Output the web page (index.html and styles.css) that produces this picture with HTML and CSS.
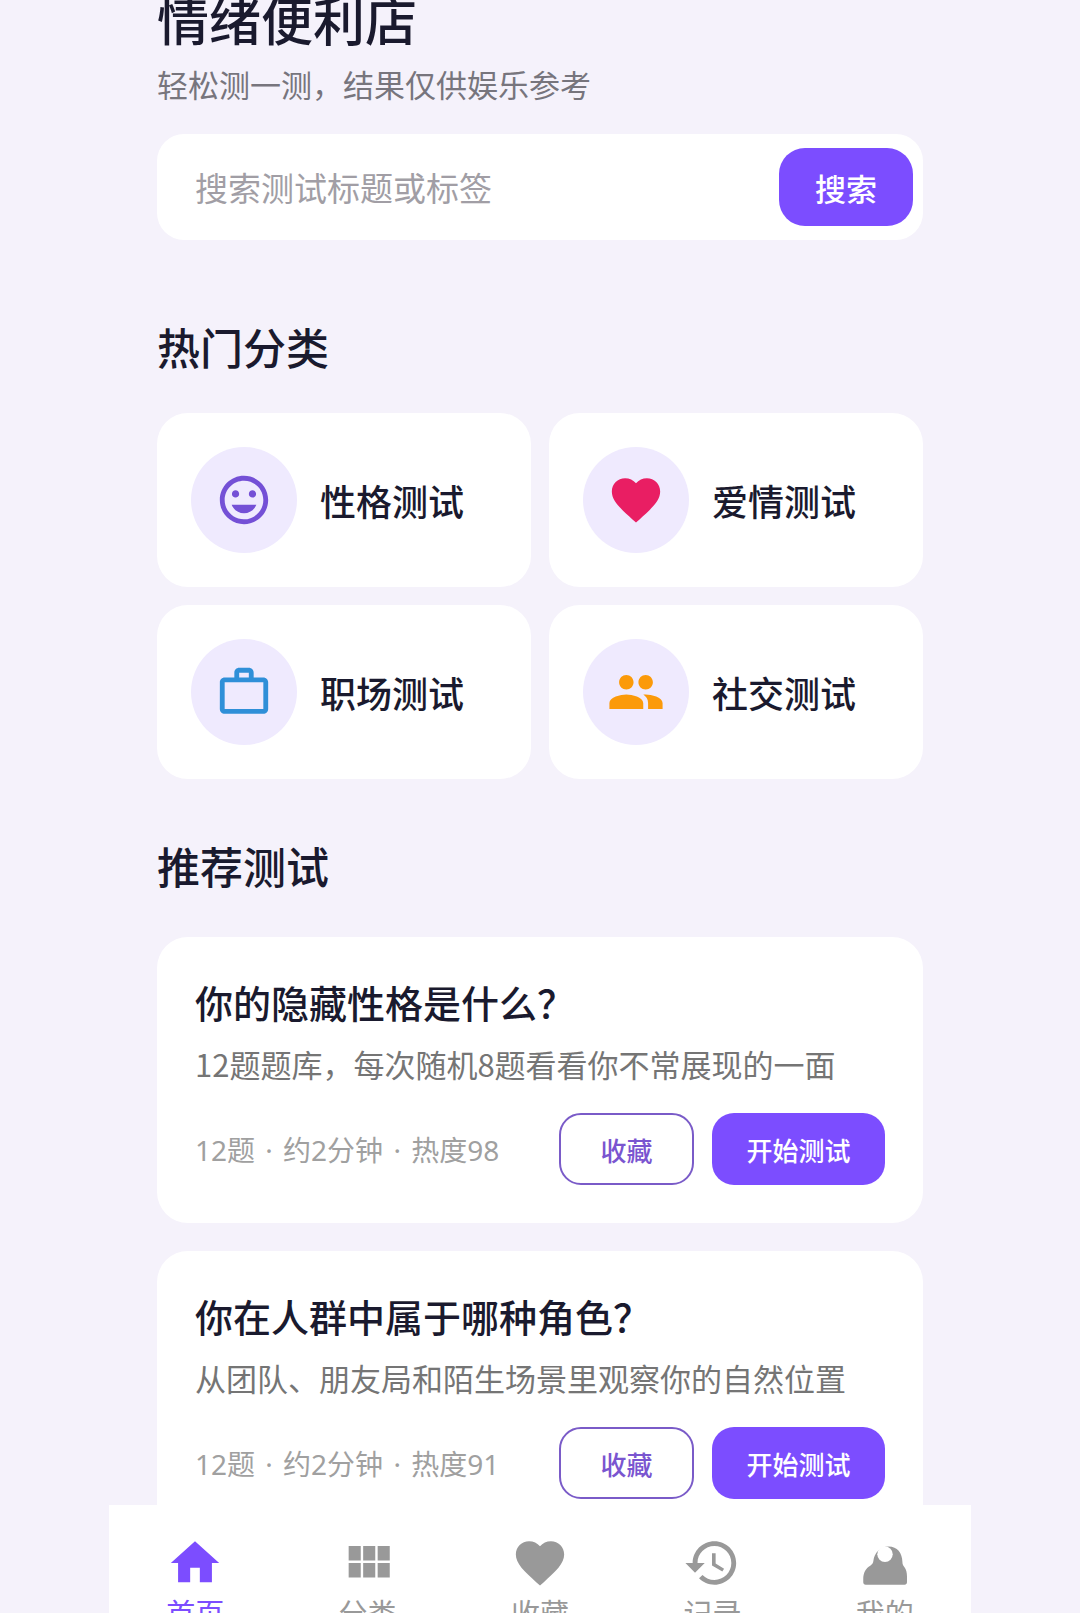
FILE: index.html
```html
<!DOCTYPE html>
<html lang="zh-CN">

<head>
    <meta charset="UTF-8" />
    <meta name="viewport" content="width=device-width, initial-scale=1.0" />
    <title>情绪便利店</title>
    <link rel="stylesheet" href="styles.css">
</head>

<body>

    <main class="page">
        <header>
            <h1>情绪便利店</h1>
            <p class="subtitle">轻松测一测，结果仅供娱乐参考</p>
        </header>

        <form class="search" role="search">
            <input type="search" placeholder="搜索测试标题或标签" aria-label="搜索测试标题或标签">
            <button type="button" class="btn btn-search">搜索</button>
        </form>

        <section class="section">
            <h2>热门分类</h2>
            <div class="category-grid">
                <a class="category" href="#personality">
                    <span class="category-icon smile">
                        <svg class="icon" viewBox="0 0 24 24" aria-hidden="true"><path d="M11.99 2C6.47 2 2 6.48 2 12s4.47 10 9.99 10C17.52 22 22 17.52 22 12S17.52 2 11.99 2zM12 20c-4.42 0-8-3.58-8-8s3.58-8 8-8 8 3.58 8 8-3.58 8-8 8zm3.5-9c.83 0 1.5-.67 1.5-1.5S16.33 8 15.5 8 14 8.67 14 9.5s.67 1.5 1.5 1.5zm-7 0c.83 0 1.5-.67 1.5-1.5S9.33 8 8.5 8 7 8.67 7 9.5 7.67 11 8.5 11zm3.5 6.5c2.33 0 4.31-1.46 5.11-3.5H6.89c.8 2.04 2.78 3.5 5.11 3.5z" /></svg>
                    </span>
                    性格测试
                </a>
                <a class="category" href="#love">
                    <span class="category-icon love">
                        <svg class="icon" viewBox="0 0 24 24" aria-hidden="true"><path d="M12 21.35l-1.45-1.32C5.4 15.36 2 12.28 2 8.5 2 5.42 4.42 3 7.5 3c1.74 0 3.41.81 4.5 2.09C13.09 3.81 14.76 3 16.5 3 19.58 3 22 5.42 22 8.5c0 3.78-3.4 6.86-8.55 11.54L12 21.35z" /></svg>
                    </span>
                    爱情测试
                </a>
                <a class="category" href="#work">
                    <span class="category-icon work">
                        <svg class="icon" viewBox="0 0 24 24" aria-hidden="true"><path d="M14 6V4h-4v2h4zM4 8v11h16V8H4zm16-2c1.11 0 2 .89 2 2v11c0 1.11-.89 2-2 2H4c-1.11 0-2-.89-2-2l.01-11c0-1.11.88-2 1.99-2h4V4c0-1.11.89-2 2-2h4c1.11 0 2 .89 2 2v2h4z" /></svg>
                    </span>
                    职场测试
                </a>
                <a class="category" href="#social">
                    <span class="category-icon social">
                        <svg class="icon" viewBox="0 0 24 24" aria-hidden="true"><path d="M16 11c1.66 0 2.99-1.34 2.99-3S17.66 5 16 5c-1.66 0-3 1.34-3 3s1.34 3 3 3zm-8 0c1.66 0 2.99-1.34 2.99-3S9.66 5 8 5C6.34 5 5 6.34 5 8s1.34 3 3 3zm0 2c-2.33 0-7 1.17-7 3.5V19h14v-2.5c0-2.33-4.67-3.5-7-3.5zm8 0c-.29 0-.62.02-.97.05 1.16.84 1.97 1.97 1.97 3.45V19h6v-2.5c0-2.33-4.67-3.5-7-3.5z" /></svg>
                    </span>
                    社交测试
                </a>
            </div>
        </section>

        <section class="section">
            <h2>推荐测试</h2>
            <div class="test-list">
                <article class="test">
                    <h3>你的隐藏性格是什么？</h3>
                    <p class="desc">12题题库，每次随机8题看看你不常展现的一面</p>
                    <div class="test-footer">
                        <span class="meta">12题 <span class="dot">·</span> 约2分钟 <span class="dot">·</span> 热度98</span>
                        <button type="button" class="btn btn-outline">收藏</button>
                        <button type="button" class="btn btn-start">开始测试</button>
                    </div>
                </article>
                <article class="test">
                    <h3>你在人群中属于哪种角色？</h3>
                    <p class="desc">从团队、朋友局和陌生场景里观察你的自然位置</p>
                    <div class="test-footer">
                        <span class="meta">12题 <span class="dot">·</span> 约2分钟 <span class="dot">·</span> 热度91</span>
                        <button type="button" class="btn btn-outline">收藏</button>
                        <button type="button" class="btn btn-start">开始测试</button>
                    </div>
                </article>
            </div>
        </section>
    </main>

    <!-- 底部导航 -->
    <nav class="tabbar">
        <a class="tab active" href="#home">
            <svg class="icon" viewBox="0 0 24 24" aria-hidden="true"><path d="M10 20v-6h4v6h5v-8h3L12 3 2 12h3v8z" /></svg>
            首页
        </a>
        <a class="tab" href="#category">
            <svg class="icon" viewBox="0 0 24 24" aria-hidden="true"><path d="M4 11h5V5H4v6zm0 7h5v-6H4v6zm6 0h5v-6h-5v6zm6 0h5v-6h-5v6zm-6-7h5V5h-5v6zm6-6v6h5V5h-5z" /></svg>
            分类
        </a>
        <a class="tab" href="#favorite">
            <svg class="icon" viewBox="0 0 24 24" aria-hidden="true"><path d="M12 21.35l-1.45-1.32C5.4 15.36 2 12.28 2 8.5 2 5.42 4.42 3 7.5 3c1.74 0 3.41.81 4.5 2.09C13.09 3.81 14.76 3 16.5 3 19.58 3 22 5.42 22 8.5c0 3.78-3.4 6.86-8.55 11.54L12 21.35z" /></svg>
            收藏
        </a>
        <a class="tab" href="#history">
            <svg class="icon" viewBox="0 0 24 24" aria-hidden="true"><path d="M13 3c-4.97 0-9 4.03-9 9H1l3.89 3.89.07.14L9 12H6c0-3.87 3.13-7 7-7s7 3.13 7 7-3.13 7-7 7c-1.93 0-3.68-.79-4.94-2.06l-1.42 1.42C8.27 19.99 10.51 21 13 21c4.97 0 9-4.03 9-9s-4.03-9-9-9zm-1 5v5l4.28 2.54.72-1.21-3.5-2.08V8H12z" /></svg>
            记录
        </a>
        <a class="tab" href="#mine">
            <svg class="icon" viewBox="0 0 24 24" aria-hidden="true">
                <path d="M3 20v-1.5c0-2.4 1-4.3 2.9-5.4.9-.5 1.2-1.1 1.3-2C7.6 7.8 10 5.2 13.5 5.2c3.6 0 5.6 2.7 5.700 6.300 0 .9.2 1.500.8 2.200.8 1 1.100 2.300 1.100 3.900V20c0 .7-.4 1-1 1H4c-.6 0-1-.3-1-1z" />
                <circle class="face" cx="12" cy="8.4" r="3.2" />
            </svg>
            我的
        </a>
    </nav>

</body>

</html>
```
FILE: styles.css
```css
* {
    box-sizing: border-box;
}

body {
    margin: 0;
    background: #f5f2fb;
    color: #1a1a2e;
    font-family: "Noto Sans CJK SC", sans-serif;
}

h1,
h2,
h3,
p {
    margin: 0;
    font-weight: 500;
}

a {
    color: inherit;
    text-decoration: none;
}

.icon {
    width: 58px;
    height: 58px;
    fill: currentColor;
}

.page {
    max-width: 862px;
    margin: 0 auto;
    padding: 0 48px;
}

h1 {
    font-size: 52px;
    line-height: 38px;
}

.subtitle {
    margin-top: 22px;
    font-size: 31px;
    font-weight: 400;
    line-height: 48px;
    color: #77757d;
}

/* 搜索框 */
.search {
    display: flex;
    align-items: center;
    margin-top: 26px;
    padding: 14px 10px 14px 38px;
    border-radius: 27px;
    background: #fff;
}

.search input {
    flex: 1;
    min-width: 0;
    height: 78px;
    padding: 0;
    border: 0;
    outline: 0;
    background: none;
    font: inherit;
    font-size: 33px;
}

.search input::placeholder {
    color: #a19ea5;
}

.btn {
    border: 0;
    border-radius: 22px;
    background: #7c4dff;
    color: #fff;
    font: inherit;
    font-size: 26px;
    font-weight: 500;
}

.btn-search {
    width: 134px;
    height: 78px;
    border-radius: 26px;
    font-size: 31px;
}

/* 分类 */
.section {
    margin-top: 75px;
}

h2 {
    font-size: 43px;
    line-height: 62px;
}

.category-grid {
    display: grid;
    grid-template-columns: 1fr 1fr;
    gap: 18px;
    margin-top: 36px;
}

.category {
    display: flex;
    align-items: center;
    gap: 23px;
    padding: 34px;
    border-radius: 31px;
    background: #fff;
    font-size: 36px;
    font-weight: 500;
}

.category-icon {
    display: flex;
    align-items: center;
    justify-content: center;
    width: 106px;
    height: 106px;
    border-radius: 50%;
    background: #efeafe;
}

.smile {
    color: #7450d6;
}

.love {
    color: #e91e63;
}

.work {
    color: #2f8fd8;
}

.social {
    color: #fb9a0a;
}

/* 推荐列表 */
.section + .section {
    margin-top: 55px;
}

.test-list {
    display: grid;
    gap: 28px;
    margin-top: 41px;
}

.test {
    padding: 38px;
    border-radius: 31px;
    background: #fff;
}

h3 {
    font-size: 38px;
    line-height: 54px;
}

.desc {
    margin-top: 12px;
    font-size: 31px;
    font-weight: 400;
    line-height: 45px;
    color: #757575;
}

.test-footer {
    display: flex;
    align-items: center;
    gap: 18px;
    margin-top: 27px;
}

.meta {
    flex: 1;
    font-family: "Noto Sans", "Noto Sans CJK SC", sans-serif;
    font-size: 28px;
    color: #a0a0a0;
}

.dot {
    margin: 0 3px;
}

.btn-outline {
    width: 135px;
    height: 72px;
    border: 2px solid #7a5bc8;
    background: #fff;
    color: #7a55d0;
}

.btn-start {
    width: 173px;
    height: 72px;
}

/* 底部导航 */
.tabbar {
    position: fixed;
    right: 0;
    bottom: 0;
    left: 0;
    display: flex;
    max-width: 862px;
    height: 108px;
    margin: 0 auto;
    padding-top: 29px;
    overflow: hidden;
    background: #fff;
}

.tab {
    display: flex;
    flex: 1;
    flex-direction: column;
    align-items: center;
    font-size: 29px;
    line-height: 40px;
    color: #999;
}

.tab .icon {
    flex: none;
}

.tab.active {
    color: #7c4dff;
}

.face {
    fill: #fff;
}
```
